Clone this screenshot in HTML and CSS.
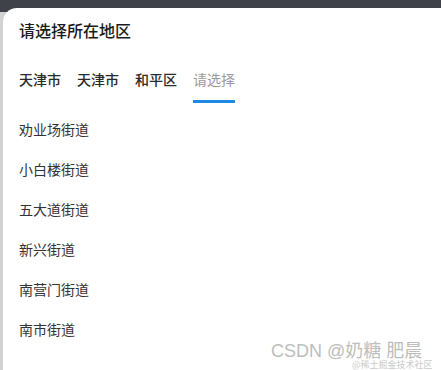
FILE: index.html
```html
<!DOCTYPE html>
<html lang="zh">
<head>
<meta charset="utf-8">
<link rel="stylesheet" href="styles.css">
</head>
<body>
<div class="screen">
  <div class="topbar"></div>
  <div class="sheet">
    <div class="title">请选择所在地区</div>
    <div class="tabs">
      <div class="tab done">天津市</div>
      <div class="tab done">天津市</div>
      <div class="tab done">和平区</div>
      <div class="tab active">请选择</div>
    </div>
    <ul class="list">
      <li>劝业场街道</li>
      <li>小白楼街道</li>
      <li>五大道街道</li>
      <li>新兴街道</li>
      <li>南营门街道</li>
      <li>南市街道</li>
    </ul>
  </div>
  <div class="wm">CSDN @奶糖 肥晨</div>
  <div class="wm-small">@稀土掘金技术社区</div>
</div>
</body>
</html>
```
FILE: styles.css
```css
html, body {
  margin: 0;
  padding: 0;
  background: #ffffff;
}
body {
  font-family: "Noto Sans CJK SC", "Liberation Sans", sans-serif;
  color: #222;
}
.screen {
  position: relative;
  width: 441px;
  height: 370px;
  overflow: hidden;
  background: #d2d2d4;
}
.topbar {
  height: 12px;
  background: #404249;
}
.sheet {
  position: absolute;
  left: 3px;
  top: 8px;
  right: 0;
  bottom: 0;
  background: #ffffff;
  border-top-left-radius: 14px;
  padding: 11px 0 0 16px;
}
.title {
  font-size: 16px;
  line-height: 22px;
  font-weight: 500;
  color: #1a1a1a;
}
.tabs {
  display: flex;
  gap: 16px;
  margin-top: 28px;
  height: 50px;
}
.tab {
  font-size: 14px;
  line-height: 20px;
  position: relative;
}
.tab.done {
  font-weight: 500;
  color: #2a2a2a;
}
.tab.active {
  color: #9a9a9a;
}
.tab.active::after {
  content: "";
  position: absolute;
  left: 0;
  right: 0;
  top: 31px;
  height: 3px;
  background: #1e88e5;
}
.list {
  list-style: none;
  margin: 0;
  padding: 0;
}
.list li {
  font-size: 14px;
  line-height: 20px;
  height: 40px;
  color: #333;
}
.wm {
  position: absolute;
  left: 271px;
  top: 342px;
  font-size: 18px;
  line-height: 18px;
  color: #bdbdbd;
  font-family: "Liberation Sans", "Noto Sans CJK SC", sans-serif;
  white-space: nowrap;
}
.wm-small {
  position: absolute;
  left: 352px;
  top: 360px;
  font-size: 9px;
  line-height: 10px;
  color: #cacaca;
  white-space: nowrap;
}
```
